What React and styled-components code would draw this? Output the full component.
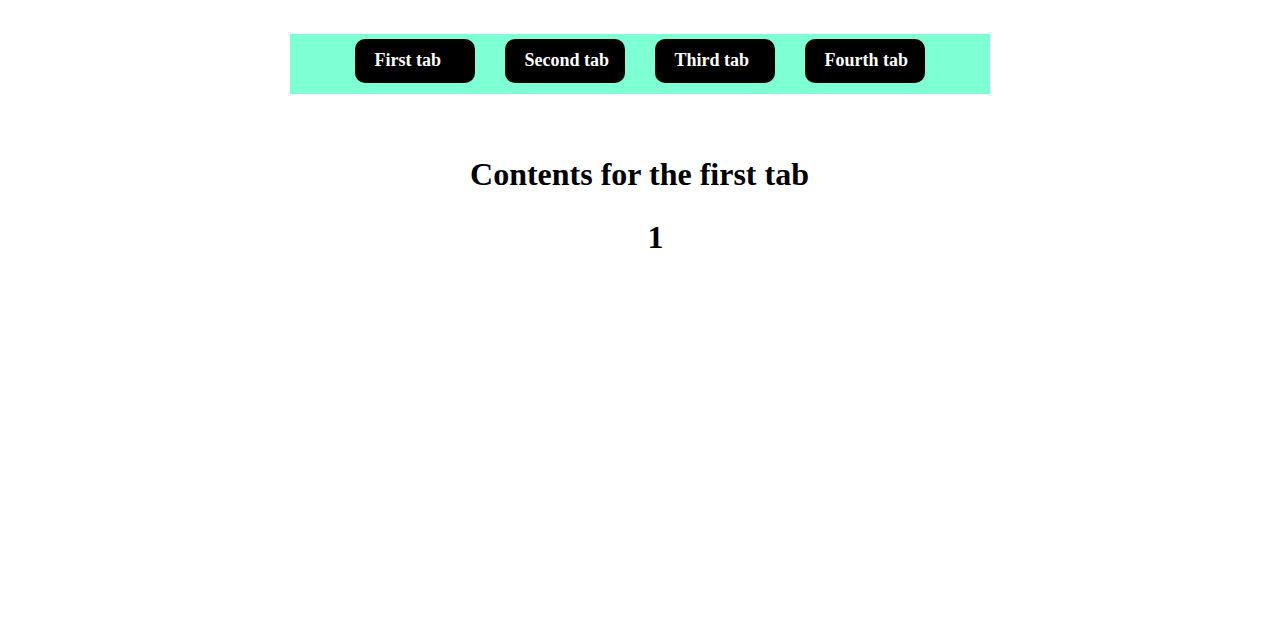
import { useState } from "react";
import styled, { createGlobalStyle } from "styled-components";

const tabs = [
	{ label: "First tab", title: "Contents for the first tab", value: 1 },
	{ label: "Second tab", title: "Contents for the second tab", value: 2 },
	{ label: "Third tab", title: "Contents for the third tab", value: 3 },
	{ label: "Fourth tab", title: "Contents for the fourth tab", value: 4 },
];

function App() {
	const [active, setActive] = useState(0);
	const current = tabs[active];

	return (
		<>
			<GlobalStyle />
			<Page>
				<TabBar>
					{tabs.map((tab, i) => (
						<TabButton
							key={tab.label}
							$active={i === active}
							onClick={() => setActive(i)}
						>
							{tab.label}
						</TabButton>
					))}
				</TabBar>
				<Content>
					<Title>{current.title}</Title>
					<Count>{current.value}</Count>
				</Content>
			</Page>
		</>
	);
}

const GlobalStyle = createGlobalStyle`
	body {
		margin: 0;
		background: #ffffff;
		font-family: "Liberation Serif", "Times New Roman", serif;
		font-size: 17px;
		color: #000000;
	}
`;

const Page = styled.div`
	display: flex;
	flex-direction: column;
	align-items: center;
	padding-top: 34px;
`;

const TabBar = styled.nav`
	display: flex;
	justify-content: center;
	align-items: flex-start;
	gap: 30px;
	box-sizing: border-box;
	width: 700px;
	height: 60px;
	padding-top: 5px;
	background: #7fffd4;
`;

const TabButton = styled.button`
	box-sizing: border-box;
	width: 120px;
	height: 44px;
	padding: 0 0 2px 20px;
	border: none;
	border-radius: 10px;
	background: #000000;
	color: #ffffff;
	font-family: inherit;
	font-size: 18px;
	font-weight: 700;
	text-align: left;
	white-space: nowrap;
	cursor: pointer;
`;

const Content = styled.section`
	margin-top: 36px;
	width: 700px;
	text-align: center;
`;

const Title = styled.h1`
	margin: 26px 0;
	font-size: 32px;
`;

const Count = styled.h1`
	margin: 26px 0;
	padding-left: 32px;
	font-size: 32px;
`;

export default App;
